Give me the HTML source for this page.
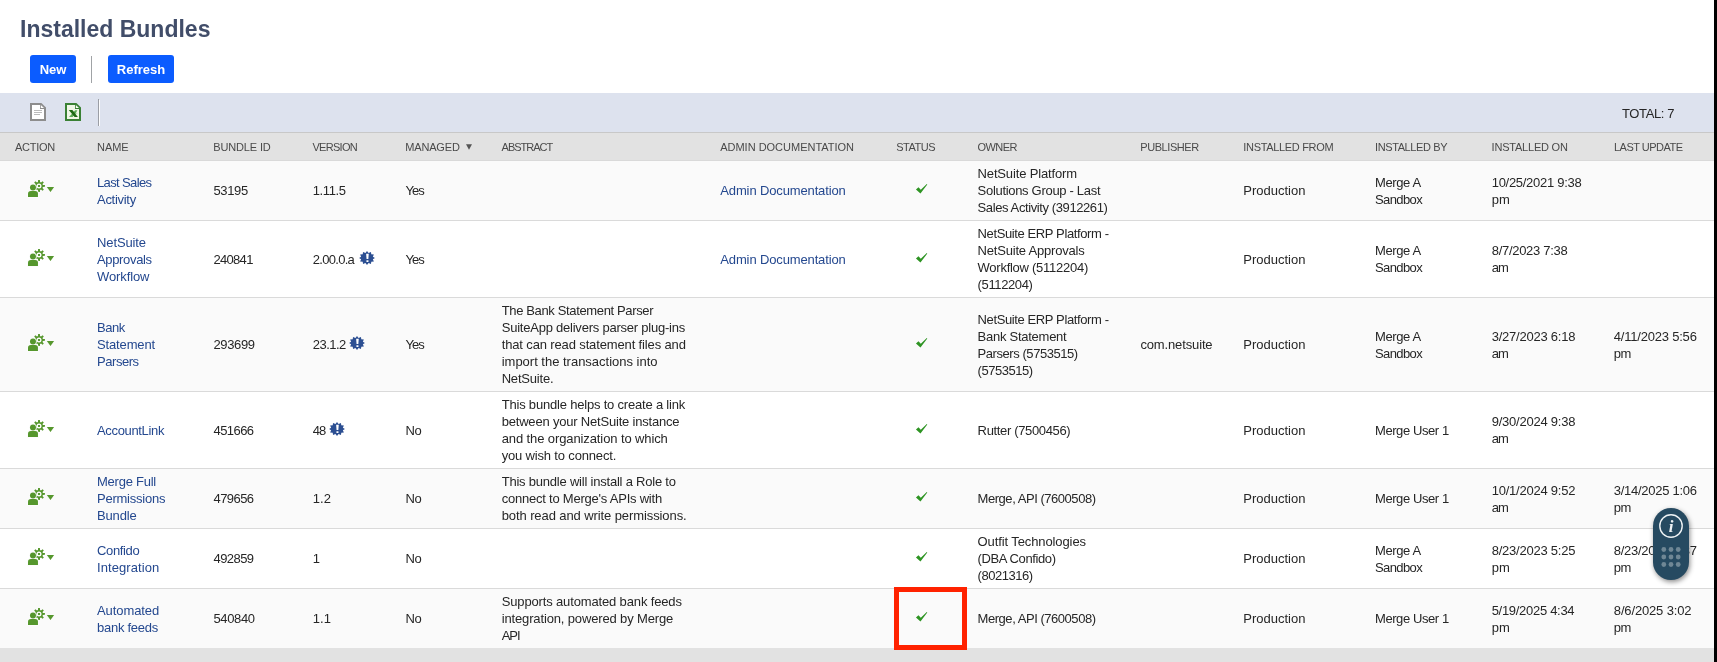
<!DOCTYPE html>
<html><head><meta charset="utf-8"><title>Installed Bundles</title>
<style>
html,body{margin:0;padding:0;background:#fff;}
#wrap{position:absolute;left:0;top:0;width:1717px;height:662px;overflow:hidden;will-change:transform}
body{width:1717px;height:662px;overflow:hidden;position:relative;font-family:"Liberation Sans",sans-serif;font-size:13px;line-height:17px;color:#262626;}
.abs{position:absolute}
h1{position:absolute;left:20px;top:12px;margin:0;font-size:23px;line-height:34px;font-weight:bold;color:#414d69;white-space:nowrap;letter-spacing:0px}
.btn{position:absolute;top:55px;height:28px;background:#0b5cff;border-radius:3px;color:#fff;font-weight:bold;font-size:13px;line-height:30px;text-align:center;white-space:nowrap}
.sep{position:absolute;width:1px;background:#a0a3a6}
.toolbar{position:absolute;left:0;top:93px;width:1714px;height:39px;background:#dde2ee;border-bottom:1px solid #c8c8c8}
.total{position:absolute;left:1622px;top:12px;font-size:13px;line-height:17px;color:#262626;white-space:nowrap}
.thead{position:absolute;left:0;top:133px;width:1714px;height:27px;background:#e2e2e2;border-bottom:1px solid #d9d9d9}
.th{position:absolute;top:1px;height:27px;line-height:27px;font-size:11px;color:#4a4a4a;white-space:nowrap}
.row{position:absolute;left:0;width:1714px;display:block}
.row.odd{background:#fafafa}
.row.even{background:#fff}
.rl{position:absolute;left:0;width:1714px;height:1px;background:#dadada}
.c{position:absolute;top:0;height:100%;display:flex;flex-direction:column;justify-content:center;white-space:nowrap}
.c .ln{display:block;width:fit-content}
.c br{display:none}
a,.lnk{color:#24488f;text-decoration:none}
.act{position:absolute;left:24px}
.chk{position:absolute;left:914px}
.badge{position:absolute}
.foot{position:absolute;left:0;top:648px;width:1714px;height:14px;background:#e2e2e2}
.edge{position:absolute;left:1714px;top:0;width:3px;height:662px;background:#000}
.hl{position:absolute;left:893.5px;top:586.6px;width:63px;height:53px;border:5px solid #ff2200}
.pill{position:absolute;left:1653px;top:508px;width:36px;height:72px;border-radius:18px;background:#264a61;box-shadow:1px 2px 5px rgba(0,0,0,.45)}
</style></head><body>

<div id="wrap">
<h1 id="title">Installed Bundles</h1>
<div class="btn" id="bnew" style="left:30px;width:46px">New</div>
<div class="sep" style="left:91px;top:56px;height:27px"></div>
<div class="btn" id="bref" style="left:108px;width:66px">Refresh</div>
<div class="toolbar">
<svg class="abs" style="left:30px;top:10px" width="16" height="18" viewBox="0 0 16 18"><path d="M0 0 H11.4 L16 4.6 V18 H0 Z" fill="#8d8d8d"/><path d="M2 2 H10 V6 H14 V16 H2 Z" fill="#fff"/><path d="M10.8 1.9 L14 5 H10.8 Z" fill="#fff"/><path d="M4 7 H12 V8 H4 Z M4 9 H12 V10 H4 Z M4 11 H10 V12 H4 Z" fill="#bcbcbc"/></svg>
<svg class="abs" style="left:65px;top:10px" width="16" height="18" viewBox="0 0 16 18"><path d="M0 0 H11.4 L16 4.6 V18 H0 Z" fill="#3a8134"/><path d="M2 2 H10 V6 H14 V16 H2 Z" fill="#f0f7e6"/><path d="M10.8 1.9 L14 5 H10.8 Z" fill="#fbfdf6"/><path d="M12.4 7.2 H10.2 L4 13.9 H7.6 L10.4 10.6 L12.9 10.2 L10.9 9.9 Z" fill="#5faa58"/><path d="M3.8 7 H7.4 L12.9 13.9 H9.6 Z" fill="#1f6a14"/></svg>
<div class="sep" style="left:98px;top:6px;height:27px;background:#9b9ea5"></div><div class="sep" style="left:99px;top:7px;height:26px;background:#fdfdfe"></div>
<div class="total" id="total" style="letter-spacing:-0.371px">TOTAL: 7</div>
</div>
<div class="thead">
<div class="th" style="left:15px"><span id="h-action" style="display:inline-block;letter-spacing:-0.288px">ACTION</span></div>
<div class="th" style="left:97px"><span id="h-name" style="display:inline-block;letter-spacing:-0.060px">NAME</span></div>
<div class="th" style="left:213.3px"><span id="h-bid" style="display:inline-block;letter-spacing:-0.151px">BUNDLE ID</span></div>
<div class="th" style="left:312.4px"><span id="h-ver" style="display:inline-block;letter-spacing:-0.705px">VERSION</span></div>
<div class="th" style="left:405.3px"><span id="h-man" style="display:inline-block;letter-spacing:-0.180px">MANAGED</span><svg style="margin-left:6px;vertical-align:1px" width="6" height="6" viewBox="0 0 6 6"><path d="M0 0.3 H6 L3 5.8 Z" fill="#555"/></svg></div>
<div class="th" style="left:501.6px"><span id="h-abs" style="display:inline-block;letter-spacing:-1.000px">ABSTRACT</span></div>
<div class="th" style="left:720.2px"><span id="h-adm" style="display:inline-block;letter-spacing:-0.010px">ADMIN DOCUMENTATION</span></div>
<div class="th" style="left:896.2px"><span id="h-status" style="display:inline-block;letter-spacing:-0.450px">STATUS</span></div>
<div class="th" style="left:977.6px"><span id="h-owner" style="display:inline-block;letter-spacing:-0.585px">OWNER</span></div>
<div class="th" style="left:1140.3px"><span id="h-pub" style="display:inline-block;letter-spacing:-0.438px">PUBLISHER</span></div>
<div class="th" style="left:1243.3px"><span id="h-ifrom" style="display:inline-block;letter-spacing:-0.327px">INSTALLED FROM</span></div>
<div class="th" style="left:1375px"><span id="h-iby" style="display:inline-block;letter-spacing:-0.396px">INSTALLED BY</span></div>
<div class="th" style="left:1491.6px"><span id="h-ion" style="display:inline-block;letter-spacing:-0.218px">INSTALLED ON</span></div>
<div class="th" style="left:1614px"><span id="h-lup" style="display:inline-block;letter-spacing:-0.504px">LAST UPDATE</span></div>
</div>
<div class="row odd" style="top:161px;height:59px">
<svg class="act" style="top:13.0px" width="36" height="28" viewBox="0 0 36 28"><g fill="#56972d">
<path fill-rule="evenodd" d="M13.95 8.06 L14.11 6.04 L15.89 6.04 L16.05 8.06 L17.02 8.46 L18.57 7.15 L19.82 8.40 L18.51 9.95 L18.91 10.92 L20.93 11.08 L20.93 12.86 L18.91 13.02 L18.51 14.00 L19.82 15.54 L18.57 16.79 L17.02 15.48 L16.05 15.88 L15.89 17.90 L14.11 17.90 L13.95 15.88 L12.98 15.48 L11.43 16.79 L10.18 15.54 L11.49 14.00 L11.09 13.02 L9.07 12.86 L9.07 11.08 L11.09 10.92 L11.49 9.95 L10.18 8.40 L11.43 7.15 L12.97 8.46 Z M15 9.47 A2.5 2.5 0 1 0 15 14.47 A2.5 2.5 0 1 0 15 9.47 Z"/>
<rect x="13.95" y="10.92" width="2.1" height="2.1" rx="0.4"/>
<g fill="#fcfcfc" stroke="#fcfcfc" stroke-width="1.7"><circle cx="8.97" cy="13.54" r="3.0"/><path d="M4 23.05 V19.7 Q4 16.9 6.9 16.9 H11.1 Q13.96 16.9 13.96 19.7 V23.05 Z"/></g>
<circle cx="8.97" cy="13.54" r="3.0"/>
<path d="M4 23.05 V19.7 Q4 16.9 6.9 16.9 H11.1 Q13.96 16.9 13.96 19.7 V23.05 Z"/>
<path d="M22.84 13.1 H30.12 L26.48 18 Z"/>
</g></svg>
<div class="c lnk" style="left:97px"><span class="ln" id="r0-name-0" style="letter-spacing:-0.630px">Last Sales</span><br><span class="ln" id="r0-name-1" style="letter-spacing:-0.286px">Activity</span></div>
<div class="c " style="left:213.5px"><span class="ln" id="r0-bid-0" style="letter-spacing:-0.374px">53195</span></div>
<div class="c" style="left:312.8px"><div><span id="r0-ver-0" style="letter-spacing:-0.414px">1.11.5</span></div></div>
<div class="c " style="left:405.6px"><span class="ln" id="r0-man-0" style="letter-spacing:-1.000px">Yes</span></div>

<div class="c lnk" style="left:720.3px"><span class="ln" id="r0-adm-0" style="letter-spacing:-0.135px">Admin Documentation</span></div>
<svg class="chk" style="top:21.0px" width="16" height="14" viewBox="0 0 16 14"><path fill="#2e9423" d="M1.97 7.46 L4.47 5.14 L6.8 7.8 L12.77 1.98 L13.3 2.6 L6.46 11.6 Z"/></svg>
<div class="c " style="left:977.6px"><span class="ln" id="r0-owner-0" style="letter-spacing:-0.156px">NetSuite Platform</span><br><span class="ln" id="r0-owner-1" style="letter-spacing:-0.306px">Solutions Group - Last</span><br><span class="ln" id="r0-owner-2" style="letter-spacing:-0.400px">Sales Activity (3912261)</span></div>
<div class="c " style="left:1243.3px"><span class="ln" id="r0-ifrom-0" style="letter-spacing:-0.010px">Production</span></div>
<div class="c " style="left:1375px"><span class="ln" id="r0-iby-0" style="letter-spacing:-0.375px">Merge A</span><br><span class="ln" id="r0-iby-1" style="letter-spacing:-0.600px">Sandbox</span></div>
<div class="c " style="left:1491.7px"><span class="ln" id="r0-ion-0" style="letter-spacing:-0.286px">10/25/2021 9:38</span><br><span class="ln" id="r0-ion-1" style="letter-spacing:0.090px">pm</span></div>

</div>
<div class="rl" style="top:220px"></div>
<div class="row even" style="top:221px;height:76px">
<svg class="act" style="top:21.5px" width="36" height="28" viewBox="0 0 36 28"><g fill="#56972d">
<path fill-rule="evenodd" d="M13.95 8.06 L14.11 6.04 L15.89 6.04 L16.05 8.06 L17.02 8.46 L18.57 7.15 L19.82 8.40 L18.51 9.95 L18.91 10.92 L20.93 11.08 L20.93 12.86 L18.91 13.02 L18.51 14.00 L19.82 15.54 L18.57 16.79 L17.02 15.48 L16.05 15.88 L15.89 17.90 L14.11 17.90 L13.95 15.88 L12.98 15.48 L11.43 16.79 L10.18 15.54 L11.49 14.00 L11.09 13.02 L9.07 12.86 L9.07 11.08 L11.09 10.92 L11.49 9.95 L10.18 8.40 L11.43 7.15 L12.97 8.46 Z M15 9.47 A2.5 2.5 0 1 0 15 14.47 A2.5 2.5 0 1 0 15 9.47 Z"/>
<rect x="13.95" y="10.92" width="2.1" height="2.1" rx="0.4"/>
<g fill="#fcfcfc" stroke="#fcfcfc" stroke-width="1.7"><circle cx="8.97" cy="13.54" r="3.0"/><path d="M4 23.05 V19.7 Q4 16.9 6.9 16.9 H11.1 Q13.96 16.9 13.96 19.7 V23.05 Z"/></g>
<circle cx="8.97" cy="13.54" r="3.0"/>
<path d="M4 23.05 V19.7 Q4 16.9 6.9 16.9 H11.1 Q13.96 16.9 13.96 19.7 V23.05 Z"/>
<path d="M22.84 13.1 H30.12 L26.48 18 Z"/>
</g></svg>
<div class="c lnk" style="left:97px"><span class="ln" id="r1-name-0" style="letter-spacing:-0.111px">NetSuite</span><br><span class="ln" id="r1-name-1" style="letter-spacing:-0.338px">Approvals</span><br><span class="ln" id="r1-name-2" style="letter-spacing:-0.100px">Workflow</span></div>
<div class="c " style="left:213.5px"><span class="ln" id="r1-bid-0" style="letter-spacing:-0.702px">240841</span></div>
<div class="c" style="left:312.8px"><div><span id="r1-ver-0" style="letter-spacing:-0.707px">2.00.0.a</span></div></div>
<svg class="badge" style="left:358.1px;top:28.75px" width="18" height="16" viewBox="-9 -8 18 16"><path fill="#2c4f92" d="M0.00 -6.95 L1.56 -5.10 L3.97 -6.02 L4.27 -3.73 L6.88 -3.48 L5.84 -1.37 L7.95 0.00 L5.84 1.37 L6.88 3.47 L4.27 3.73 L3.97 6.02 L1.56 5.10 L0.00 6.95 L-1.56 5.10 L-3.97 6.02 L-4.27 3.73 L-6.88 3.48 L-5.84 1.37 L-7.95 0.00 L-5.84 -1.37 L-6.88 -3.48 L-4.27 -3.73 L-3.98 -6.02 L-1.56 -5.10 Z"/><path fill="#fff" d="M-0.85 -4.2 H1.75 L1.35 0.9 H-0.45 Z M-0.55 2.3 H1.45 V4.1 H-0.55 Z"/></svg>
<div class="c " style="left:405.6px"><span class="ln" id="r1-man-0" style="letter-spacing:-1.000px">Yes</span></div>

<div class="c lnk" style="left:720.3px"><span class="ln" id="r1-adm-0" style="letter-spacing:-0.135px">Admin Documentation</span></div>
<svg class="chk" style="top:29.5px" width="16" height="14" viewBox="0 0 16 14"><path fill="#2e9423" d="M1.97 7.46 L4.47 5.14 L6.8 7.8 L12.77 1.98 L13.3 2.6 L6.46 11.6 Z"/></svg>
<div class="c " style="left:977.6px"><span class="ln" id="r1-owner-0" style="letter-spacing:-0.389px">NetSuite ERP Platform -</span><br><span class="ln" id="r1-owner-1" style="letter-spacing:-0.205px">NetSuite Approvals</span><br><span class="ln" id="r1-owner-2" style="letter-spacing:-0.265px">Workflow (5112204)</span><br><span class="ln" id="r1-owner-3" style="letter-spacing:-0.376px">(5112204)</span></div>
<div class="c " style="left:1243.3px"><span class="ln" id="r1-ifrom-0" style="letter-spacing:-0.010px">Production</span></div>
<div class="c " style="left:1375px"><span class="ln" id="r1-iby-0" style="letter-spacing:-0.375px">Merge A</span><br><span class="ln" id="r1-iby-1" style="letter-spacing:-0.600px">Sandbox</span></div>
<div class="c " style="left:1491.7px"><span class="ln" id="r1-ion-0" style="letter-spacing:-0.286px">8/7/2023 7:38</span><br><span class="ln" id="r1-ion-1" style="letter-spacing:-0.810px">am</span></div>

</div>
<div class="rl" style="top:297px"></div>
<div class="row odd" style="top:298px;height:93px">
<svg class="act" style="top:30.0px" width="36" height="28" viewBox="0 0 36 28"><g fill="#56972d">
<path fill-rule="evenodd" d="M13.95 8.06 L14.11 6.04 L15.89 6.04 L16.05 8.06 L17.02 8.46 L18.57 7.15 L19.82 8.40 L18.51 9.95 L18.91 10.92 L20.93 11.08 L20.93 12.86 L18.91 13.02 L18.51 14.00 L19.82 15.54 L18.57 16.79 L17.02 15.48 L16.05 15.88 L15.89 17.90 L14.11 17.90 L13.95 15.88 L12.98 15.48 L11.43 16.79 L10.18 15.54 L11.49 14.00 L11.09 13.02 L9.07 12.86 L9.07 11.08 L11.09 10.92 L11.49 9.95 L10.18 8.40 L11.43 7.15 L12.97 8.46 Z M15 9.47 A2.5 2.5 0 1 0 15 14.47 A2.5 2.5 0 1 0 15 9.47 Z"/>
<rect x="13.95" y="10.92" width="2.1" height="2.1" rx="0.4"/>
<g fill="#fcfcfc" stroke="#fcfcfc" stroke-width="1.7"><circle cx="8.97" cy="13.54" r="3.0"/><path d="M4 23.05 V19.7 Q4 16.9 6.9 16.9 H11.1 Q13.96 16.9 13.96 19.7 V23.05 Z"/></g>
<circle cx="8.97" cy="13.54" r="3.0"/>
<path d="M4 23.05 V19.7 Q4 16.9 6.9 16.9 H11.1 Q13.96 16.9 13.96 19.7 V23.05 Z"/>
<path d="M22.84 13.1 H30.12 L26.48 18 Z"/>
</g></svg>
<div class="c lnk" style="left:97px"><span class="ln" id="r2-name-0" style="letter-spacing:-0.450px">Bank</span><br><span class="ln" id="r2-name-1" style="letter-spacing:-0.139px">Statement</span><br><span class="ln" id="r2-name-2" style="letter-spacing:-0.450px">Parsers</span></div>
<div class="c " style="left:213.5px"><span class="ln" id="r2-bid-0" style="letter-spacing:-0.378px">293699</span></div>
<div class="c" style="left:312.8px"><div><span id="r2-ver-0" style="letter-spacing:-0.522px">23.1.2</span></div></div>
<svg class="badge" style="left:348.4px;top:37.25px" width="18" height="16" viewBox="-9 -8 18 16"><path fill="#2c4f92" d="M0.00 -6.95 L1.56 -5.10 L3.97 -6.02 L4.27 -3.73 L6.88 -3.48 L5.84 -1.37 L7.95 0.00 L5.84 1.37 L6.88 3.47 L4.27 3.73 L3.97 6.02 L1.56 5.10 L0.00 6.95 L-1.56 5.10 L-3.97 6.02 L-4.27 3.73 L-6.88 3.48 L-5.84 1.37 L-7.95 0.00 L-5.84 -1.37 L-6.88 -3.48 L-4.27 -3.73 L-3.98 -6.02 L-1.56 -5.10 Z"/><path fill="#fff" d="M-0.85 -4.2 H1.75 L1.35 0.9 H-0.45 Z M-0.55 2.3 H1.45 V4.1 H-0.55 Z"/></svg>
<div class="c " style="left:405.6px"><span class="ln" id="r2-man-0" style="letter-spacing:-1.000px">Yes</span></div>
<div class="c " style="left:501.7px"><span class="ln" id="r2-abs-0" style="letter-spacing:-0.357px">The Bank Statement Parser</span><br><span class="ln" id="r2-abs-1" style="letter-spacing:-0.225px">SuiteApp delivers parser plug-ins</span><br><span class="ln" id="r2-abs-2" style="letter-spacing:-0.137px">that can read statement files and</span><br><span class="ln" id="r2-abs-3" style="letter-spacing:-0.010px">import the transactions into</span><br><span class="ln" id="r2-abs-4" style="letter-spacing:-0.206px">NetSuite.</span></div>
<svg class="chk" style="top:38.0px" width="16" height="14" viewBox="0 0 16 14"><path fill="#2e9423" d="M1.97 7.46 L4.47 5.14 L6.8 7.8 L12.77 1.98 L13.3 2.6 L6.46 11.6 Z"/></svg>
<div class="c " style="left:977.6px"><span class="ln" id="r2-owner-0" style="letter-spacing:-0.389px">NetSuite ERP Platform -</span><br><span class="ln" id="r2-owner-1" style="letter-spacing:-0.263px">Bank Statement</span><br><span class="ln" id="r2-owner-2" style="letter-spacing:-0.442px">Parsers (5753515)</span><br><span class="ln" id="r2-owner-3" style="letter-spacing:-0.488px">(5753515)</span></div>
<div class="c " style="left:1140.4px"><span class="ln" id="r2-pub-0" style="letter-spacing:-0.136px">com.netsuite</span></div>
<div class="c " style="left:1243.3px"><span class="ln" id="r2-ifrom-0" style="letter-spacing:-0.010px">Production</span></div>
<div class="c " style="left:1375px"><span class="ln" id="r2-iby-0" style="letter-spacing:-0.375px">Merge A</span><br><span class="ln" id="r2-iby-1" style="letter-spacing:-0.600px">Sandbox</span></div>
<div class="c " style="left:1491.7px"><span class="ln" id="r2-ion-0" style="letter-spacing:-0.227px">3/27/2023 6:18</span><br><span class="ln" id="r2-ion-1" style="letter-spacing:-0.810px">am</span></div>
<div class="c " style="left:1613.8px"><span class="ln" id="r2-lup-0" style="letter-spacing:-0.208px">4/11/2023 5:56</span><br><span class="ln" id="r2-lup-1" style="letter-spacing:-0.540px">pm</span></div>
</div>
<div class="rl" style="top:391px"></div>
<div class="row even" style="top:392px;height:76px">
<svg class="act" style="top:21.5px" width="36" height="28" viewBox="0 0 36 28"><g fill="#56972d">
<path fill-rule="evenodd" d="M13.95 8.06 L14.11 6.04 L15.89 6.04 L16.05 8.06 L17.02 8.46 L18.57 7.15 L19.82 8.40 L18.51 9.95 L18.91 10.92 L20.93 11.08 L20.93 12.86 L18.91 13.02 L18.51 14.00 L19.82 15.54 L18.57 16.79 L17.02 15.48 L16.05 15.88 L15.89 17.90 L14.11 17.90 L13.95 15.88 L12.98 15.48 L11.43 16.79 L10.18 15.54 L11.49 14.00 L11.09 13.02 L9.07 12.86 L9.07 11.08 L11.09 10.92 L11.49 9.95 L10.18 8.40 L11.43 7.15 L12.97 8.46 Z M15 9.47 A2.5 2.5 0 1 0 15 14.47 A2.5 2.5 0 1 0 15 9.47 Z"/>
<rect x="13.95" y="10.92" width="2.1" height="2.1" rx="0.4"/>
<g fill="#fcfcfc" stroke="#fcfcfc" stroke-width="1.7"><circle cx="8.97" cy="13.54" r="3.0"/><path d="M4 23.05 V19.7 Q4 16.9 6.9 16.9 H11.1 Q13.96 16.9 13.96 19.7 V23.05 Z"/></g>
<circle cx="8.97" cy="13.54" r="3.0"/>
<path d="M4 23.05 V19.7 Q4 16.9 6.9 16.9 H11.1 Q13.96 16.9 13.96 19.7 V23.05 Z"/>
<path d="M22.84 13.1 H30.12 L26.48 18 Z"/>
</g></svg>
<div class="c lnk" style="left:97px"><span class="ln" id="r3-name-0" style="letter-spacing:-0.342px">AccountLink</span></div>
<div class="c " style="left:213.5px"><span class="ln" id="r3-bid-0" style="letter-spacing:-0.558px">451666</span></div>
<div class="c" style="left:312.8px"><div><span id="r3-ver-0" style="letter-spacing:-1.000px">48</span></div></div>
<svg class="badge" style="left:328.3px;top:28.75px" width="18" height="16" viewBox="-9 -8 18 16"><path fill="#2c4f92" d="M0.00 -6.95 L1.56 -5.10 L3.97 -6.02 L4.27 -3.73 L6.88 -3.48 L5.84 -1.37 L7.95 0.00 L5.84 1.37 L6.88 3.47 L4.27 3.73 L3.97 6.02 L1.56 5.10 L0.00 6.95 L-1.56 5.10 L-3.97 6.02 L-4.27 3.73 L-6.88 3.48 L-5.84 1.37 L-7.95 0.00 L-5.84 -1.37 L-6.88 -3.48 L-4.27 -3.73 L-3.98 -6.02 L-1.56 -5.10 Z"/><path fill="#fff" d="M-0.85 -4.2 H1.75 L1.35 0.9 H-0.45 Z M-0.55 2.3 H1.45 V4.1 H-0.55 Z"/></svg>
<div class="c " style="left:405.6px"><span class="ln" id="r3-man-0" style="letter-spacing:-0.450px">No</span></div>
<div class="c " style="left:501.7px"><span class="ln" id="r3-abs-0" style="letter-spacing:-0.197px">This bundle helps to create a link</span><br><span class="ln" id="r3-abs-1" style="letter-spacing:-0.195px">between your NetSuite instance</span><br><span class="ln" id="r3-abs-2" style="letter-spacing:-0.106px">and the organization to which</span><br><span class="ln" id="r3-abs-3" style="letter-spacing:-0.167px">you wish to connect.</span></div>
<svg class="chk" style="top:29.5px" width="16" height="14" viewBox="0 0 16 14"><path fill="#2e9423" d="M1.97 7.46 L4.47 5.14 L6.8 7.8 L12.77 1.98 L13.3 2.6 L6.46 11.6 Z"/></svg>
<div class="c " style="left:977.6px"><span class="ln" id="r3-owner-0" style="letter-spacing:-0.348px">Rutter (7500456)</span></div>
<div class="c " style="left:1243.3px"><span class="ln" id="r3-ifrom-0" style="letter-spacing:-0.010px">Production</span></div>
<div class="c " style="left:1375px"><span class="ln" id="r3-iby-0" style="letter-spacing:-0.422px">Merge User 1</span></div>
<div class="c " style="left:1491.7px"><span class="ln" id="r3-ion-0" style="letter-spacing:-0.227px">9/30/2024 9:38</span><br><span class="ln" id="r3-ion-1" style="letter-spacing:-0.810px">am</span></div>

</div>
<div class="rl" style="top:468px"></div>
<div class="row odd" style="top:469px;height:59px">
<svg class="act" style="top:13.0px" width="36" height="28" viewBox="0 0 36 28"><g fill="#56972d">
<path fill-rule="evenodd" d="M13.95 8.06 L14.11 6.04 L15.89 6.04 L16.05 8.06 L17.02 8.46 L18.57 7.15 L19.82 8.40 L18.51 9.95 L18.91 10.92 L20.93 11.08 L20.93 12.86 L18.91 13.02 L18.51 14.00 L19.82 15.54 L18.57 16.79 L17.02 15.48 L16.05 15.88 L15.89 17.90 L14.11 17.90 L13.95 15.88 L12.98 15.48 L11.43 16.79 L10.18 15.54 L11.49 14.00 L11.09 13.02 L9.07 12.86 L9.07 11.08 L11.09 10.92 L11.49 9.95 L10.18 8.40 L11.43 7.15 L12.97 8.46 Z M15 9.47 A2.5 2.5 0 1 0 15 14.47 A2.5 2.5 0 1 0 15 9.47 Z"/>
<rect x="13.95" y="10.92" width="2.1" height="2.1" rx="0.4"/>
<g fill="#fcfcfc" stroke="#fcfcfc" stroke-width="1.7"><circle cx="8.97" cy="13.54" r="3.0"/><path d="M4 23.05 V19.7 Q4 16.9 6.9 16.9 H11.1 Q13.96 16.9 13.96 19.7 V23.05 Z"/></g>
<circle cx="8.97" cy="13.54" r="3.0"/>
<path d="M4 23.05 V19.7 Q4 16.9 6.9 16.9 H11.1 Q13.96 16.9 13.96 19.7 V23.05 Z"/>
<path d="M22.84 13.1 H30.12 L26.48 18 Z"/>
</g></svg>
<div class="c lnk" style="left:97px"><span class="ln" id="r4-name-0" style="letter-spacing:-0.240px">Merge Full</span><br><span class="ln" id="r4-name-1" style="letter-spacing:-0.234px">Permissions</span><br><span class="ln" id="r4-name-2" style="letter-spacing:-0.144px">Bundle</span></div>
<div class="c " style="left:213.5px"><span class="ln" id="r4-bid-0" style="letter-spacing:-0.558px">479656</span></div>
<div class="c" style="left:312.8px"><div><span id="r4-ver-0">1.2</span></div></div>
<div class="c " style="left:405.6px"><span class="ln" id="r4-man-0" style="letter-spacing:-0.450px">No</span></div>
<div class="c " style="left:501.7px"><span class="ln" id="r4-abs-0" style="letter-spacing:-0.215px">This bundle will install a Role to</span><br><span class="ln" id="r4-abs-1" style="letter-spacing:-0.224px">connect to Merge's APIs with</span><br><span class="ln" id="r4-abs-2" style="letter-spacing:-0.094px">both read and write permissions.</span></div>
<svg class="chk" style="top:21.0px" width="16" height="14" viewBox="0 0 16 14"><path fill="#2e9423" d="M1.97 7.46 L4.47 5.14 L6.8 7.8 L12.77 1.98 L13.3 2.6 L6.46 11.6 Z"/></svg>
<div class="c " style="left:977.6px"><span class="ln" id="r4-owner-0" style="letter-spacing:-0.462px">Merge, API (7600508)</span></div>
<div class="c " style="left:1243.3px"><span class="ln" id="r4-ifrom-0" style="letter-spacing:-0.010px">Production</span></div>
<div class="c " style="left:1375px"><span class="ln" id="r4-iby-0" style="letter-spacing:-0.422px">Merge User 1</span></div>
<div class="c " style="left:1491.7px"><span class="ln" id="r4-ion-0" style="letter-spacing:-0.227px">10/1/2024 9:52</span><br><span class="ln" id="r4-ion-1" style="letter-spacing:-0.810px">am</span></div>
<div class="c " style="left:1613.8px"><span class="ln" id="r4-lup-0" style="letter-spacing:-0.277px">3/14/2025 1:06</span><br><span class="ln" id="r4-lup-1" style="letter-spacing:-0.540px">pm</span></div>
</div>
<div class="rl" style="top:528px"></div>
<div class="row even" style="top:529px;height:59px">
<svg class="act" style="top:13.0px" width="36" height="28" viewBox="0 0 36 28"><g fill="#56972d">
<path fill-rule="evenodd" d="M13.95 8.06 L14.11 6.04 L15.89 6.04 L16.05 8.06 L17.02 8.46 L18.57 7.15 L19.82 8.40 L18.51 9.95 L18.91 10.92 L20.93 11.08 L20.93 12.86 L18.91 13.02 L18.51 14.00 L19.82 15.54 L18.57 16.79 L17.02 15.48 L16.05 15.88 L15.89 17.90 L14.11 17.90 L13.95 15.88 L12.98 15.48 L11.43 16.79 L10.18 15.54 L11.49 14.00 L11.09 13.02 L9.07 12.86 L9.07 11.08 L11.09 10.92 L11.49 9.95 L10.18 8.40 L11.43 7.15 L12.97 8.46 Z M15 9.47 A2.5 2.5 0 1 0 15 14.47 A2.5 2.5 0 1 0 15 9.47 Z"/>
<rect x="13.95" y="10.92" width="2.1" height="2.1" rx="0.4"/>
<g fill="#fcfcfc" stroke="#fcfcfc" stroke-width="1.7"><circle cx="8.97" cy="13.54" r="3.0"/><path d="M4 23.05 V19.7 Q4 16.9 6.9 16.9 H11.1 Q13.96 16.9 13.96 19.7 V23.05 Z"/></g>
<circle cx="8.97" cy="13.54" r="3.0"/>
<path d="M4 23.05 V19.7 Q4 16.9 6.9 16.9 H11.1 Q13.96 16.9 13.96 19.7 V23.05 Z"/>
<path d="M22.84 13.1 H30.12 L26.48 18 Z"/>
</g></svg>
<div class="c lnk" style="left:97px"><span class="ln" id="r5-name-0" style="letter-spacing:-0.360px">Confido</span><br><span class="ln" id="r5-name-1" style="letter-spacing:0.090px">Integration</span></div>
<div class="c " style="left:213.5px"><span class="ln" id="r5-bid-0" style="letter-spacing:-0.558px">492859</span></div>
<div class="c" style="left:312.8px"><div><span id="r5-ver-0">1</span></div></div>
<div class="c " style="left:405.6px"><span class="ln" id="r5-man-0" style="letter-spacing:-0.450px">No</span></div>

<svg class="chk" style="top:21.0px" width="16" height="14" viewBox="0 0 16 14"><path fill="#2e9423" d="M1.97 7.46 L4.47 5.14 L6.8 7.8 L12.77 1.98 L13.3 2.6 L6.46 11.6 Z"/></svg>
<div class="c " style="left:977.6px"><span class="ln" id="r5-owner-0" style="letter-spacing:-0.105px">Outfit Technologies</span><br><span class="ln" id="r5-owner-1" style="letter-spacing:-0.390px">(DBA Confido)</span><br><span class="ln" id="r5-owner-2" style="letter-spacing:-0.488px">(8021316)</span></div>
<div class="c " style="left:1243.3px"><span class="ln" id="r5-ifrom-0" style="letter-spacing:-0.010px">Production</span></div>
<div class="c " style="left:1375px"><span class="ln" id="r5-iby-0" style="letter-spacing:-0.375px">Merge A</span><br><span class="ln" id="r5-iby-1" style="letter-spacing:-0.600px">Sandbox</span></div>
<div class="c " style="left:1491.7px"><span class="ln" id="r5-ion-0" style="letter-spacing:-0.227px">8/23/2023 5:25</span><br><span class="ln" id="r5-ion-1" style="letter-spacing:0.090px">pm</span></div>
<div class="c " style="left:1613.8px"><span class="ln" id="r5-lup-0" style="letter-spacing:-0.277px">8/23/2023 1:37</span><br><span class="ln" id="r5-lup-1" style="letter-spacing:-0.540px">pm</span></div>
</div>
<div class="rl" style="top:588px"></div>
<div class="row odd" style="top:589px;height:59px">
<svg class="act" style="top:13.0px" width="36" height="28" viewBox="0 0 36 28"><g fill="#56972d">
<path fill-rule="evenodd" d="M13.95 8.06 L14.11 6.04 L15.89 6.04 L16.05 8.06 L17.02 8.46 L18.57 7.15 L19.82 8.40 L18.51 9.95 L18.91 10.92 L20.93 11.08 L20.93 12.86 L18.91 13.02 L18.51 14.00 L19.82 15.54 L18.57 16.79 L17.02 15.48 L16.05 15.88 L15.89 17.90 L14.11 17.90 L13.95 15.88 L12.98 15.48 L11.43 16.79 L10.18 15.54 L11.49 14.00 L11.09 13.02 L9.07 12.86 L9.07 11.08 L11.09 10.92 L11.49 9.95 L10.18 8.40 L11.43 7.15 L12.97 8.46 Z M15 9.47 A2.5 2.5 0 1 0 15 14.47 A2.5 2.5 0 1 0 15 9.47 Z"/>
<rect x="13.95" y="10.92" width="2.1" height="2.1" rx="0.4"/>
<g fill="#fcfcfc" stroke="#fcfcfc" stroke-width="1.7"><circle cx="8.97" cy="13.54" r="3.0"/><path d="M4 23.05 V19.7 Q4 16.9 6.9 16.9 H11.1 Q13.96 16.9 13.96 19.7 V23.05 Z"/></g>
<circle cx="8.97" cy="13.54" r="3.0"/>
<path d="M4 23.05 V19.7 Q4 16.9 6.9 16.9 H11.1 Q13.96 16.9 13.96 19.7 V23.05 Z"/>
<path d="M22.84 13.1 H30.12 L26.48 18 Z"/>
</g></svg>
<div class="c lnk" style="left:97px"><span class="ln" id="r6-name-0" style="letter-spacing:-0.086px">Automated</span><br><span class="ln" id="r6-name-1" style="letter-spacing:-0.270px">bank feeds</span></div>
<div class="c " style="left:213.5px"><span class="ln" id="r6-bid-0" style="letter-spacing:-0.378px">540840</span></div>
<div class="c" style="left:312.8px"><div><span id="r6-ver-0">1.1</span></div></div>
<div class="c " style="left:405.6px"><span class="ln" id="r6-man-0" style="letter-spacing:-0.450px">No</span></div>
<div class="c " style="left:501.7px"><span class="ln" id="r6-abs-0" style="letter-spacing:-0.145px">Supports automated bank feeds</span><br><span class="ln" id="r6-abs-1" style="letter-spacing:-0.145px">integration, powered by Merge</span><br><span class="ln" id="r6-abs-2" style="letter-spacing:-1.000px">API</span></div>
<svg class="chk" style="top:21.0px" width="16" height="14" viewBox="0 0 16 14"><path fill="#2e9423" d="M1.97 7.46 L4.47 5.14 L6.8 7.8 L12.77 1.98 L13.3 2.6 L6.46 11.6 Z"/></svg>
<div class="c " style="left:977.6px"><span class="ln" id="r6-owner-0" style="letter-spacing:-0.462px">Merge, API (7600508)</span></div>
<div class="c " style="left:1243.3px"><span class="ln" id="r6-ifrom-0" style="letter-spacing:-0.010px">Production</span></div>
<div class="c " style="left:1375px"><span class="ln" id="r6-iby-0" style="letter-spacing:-0.422px">Merge User 1</span></div>
<div class="c " style="left:1491.7px"><span class="ln" id="r6-ion-0" style="letter-spacing:-0.296px">5/19/2025 4:34</span><br><span class="ln" id="r6-ion-1" style="letter-spacing:0.090px">pm</span></div>
<div class="c " style="left:1613.8px"><span class="ln" id="r6-lup-0" style="letter-spacing:-0.151px">8/6/2025 3:02</span><br><span class="ln" id="r6-lup-1" style="letter-spacing:-0.540px">pm</span></div>
</div>
<div class="foot"></div>
<div class="hl"></div>
<div class="pill"><svg width="36" height="72" viewBox="0 0 36 72"><circle cx="18" cy="18" r="11.2" fill="none" stroke="#eef2f4" stroke-width="1.4"/><text x="18" y="23.6" text-anchor="middle" font-family="Liberation Serif, serif" font-style="italic" font-weight="bold" font-size="17" fill="#eef2f4">i</text><g fill="#6f8795"><circle cx="10.8" cy="41.5" r="2.4"/><circle cx="18" cy="41.5" r="2.4"/><circle cx="25.2" cy="41.5" r="2.4"/><circle cx="10.8" cy="49" r="2.4"/><circle cx="18" cy="49" r="2.4"/><circle cx="25.2" cy="49" r="2.4"/><circle cx="10.8" cy="56.5" r="2.4"/><circle cx="18" cy="56.5" r="2.4"/><circle cx="25.2" cy="56.5" r="2.4"/></g></svg></div>
<div class="edge"></div>
</div>
</body></html>
